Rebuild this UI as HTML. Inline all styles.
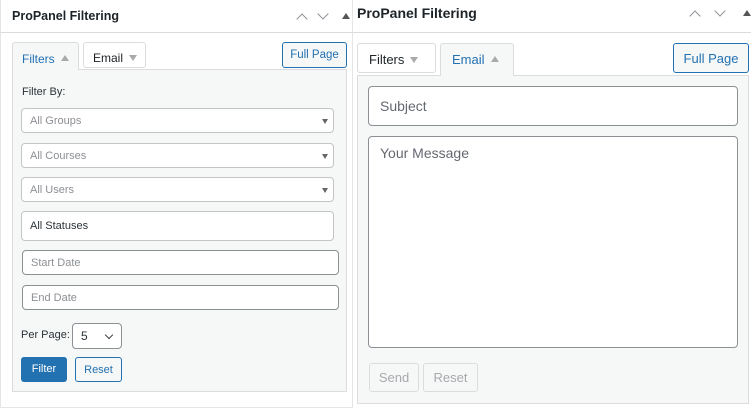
<!DOCTYPE html>
<html><head><style>
*{box-sizing:border-box;margin:0;padding:0}
body{width:751px;height:408px;background:#fff;font-family:"Liberation Sans",sans-serif;position:relative;overflow:hidden}
.a{position:absolute}
.box{position:absolute;background:#fff;border:1px solid #c3c4c7;border-radius:4px;color:#8c8f94;font-size:11px;padding-left:8px;display:flex;align-items:center}
.arr{position:absolute;right:5px;top:50%;margin-top:-2px;width:0;height:0;border-left:3.5px solid transparent;border-right:3.5px solid transparent;border-top:5px solid #666}
.chev{position:absolute;width:8px;height:8px;border-left:1.6px solid #8c8f94;border-top:1.6px solid #8c8f94}
.tri-up{display:inline-block;width:0;height:0;border-left:4px solid transparent;border-right:4px solid transparent;border-bottom:6px solid #aaa;margin-left:6px;vertical-align:2px}
.tri-dn{display:inline-block;width:0;height:0;border-left:4px solid transparent;border-right:4px solid transparent;border-top:6px solid #aaa;margin-left:6px;vertical-align:1px}
</style></head><body>
<div class="a" style="left:0;top:0;width:353px;height:408px;border:1px solid #e5e5e5;border-top:none;background:#fff"></div>
<div class="a" style="left:0;top:32px;width:353px;height:1px;background:#dcdcde"></div>
<div class="a" style="left:12px;top:9px;font-size:12.5px;font-weight:bold;color:#1d2327">ProPanel Filtering</div>
<div class="chev" style="left:298px;top:15px;transform:rotate(45deg)"></div>
<div class="chev" style="left:319px;top:10px;transform:rotate(225deg)"></div>
<div class="a" style="left:342px;top:13px;border-left:4px solid transparent;border-right:4px solid transparent;border-bottom:6px solid #555"></div>
<div class="a" style="left:12px;top:69px;width:335px;height:323px;background:#f6f7f7;border:1px solid #dcdcde"></div>
<div class="a" style="left:12px;top:42px;width:67px;height:28px;background:#f6f7f7;border:1px solid #dcdcde;border-bottom:none;border-radius:3px 3px 0 0;color:#2271b1;font-size:12px;padding:10px 0 0 9px;line-height:1">Filters<span class="tri-up"></span></div>
<div class="a" style="left:83px;top:42px;width:63px;height:26px;background:#fff;border:1px solid #dcdcde;border-radius:3px;color:#1d2327;font-size:12px;padding:9px 0 0 9px;line-height:1">Email<span class="tri-dn"></span></div>
<div class="a" style="left:282px;top:42px;width:65px;height:26px;background:#f6f7f7;border:1px solid #2271b1;border-radius:3px;color:#2271b1;font-size:11.5px;text-align:center;line-height:25px">Full Page</div>
<div class="a" style="left:22px;top:86px;font-size:11px;color:#2c3338">Filter By:</div>
<div class="box" style="left:21px;top:108px;width:313px;height:25px">All Groups<div class="arr"></div></div>
<div class="box" style="left:21px;top:143px;width:313px;height:25px">All Courses<div class="arr"></div></div>
<div class="box" style="left:21px;top:177px;width:313px;height:25px">All Users<div class="arr"></div></div>
<div class="box" style="left:21px;top:211px;width:313px;height:30px;color:#2c3338">All Statuses</div>
<div class="box" style="left:22px;top:250px;width:317px;height:25px;border-color:#8c8f94">Start Date</div>
<div class="box" style="left:22px;top:285px;width:317px;height:25px;border-color:#8c8f94">End Date</div>
<div class="a" style="left:21px;top:329px;font-size:11px;color:#2c3338">Per Page:</div>
<div class="box" style="left:72px;top:323px;width:50px;height:26px;border-color:#8c8f94;color:#2c3338;font-size:12px">5<div class="a" style="right:9px;top:8px;width:6px;height:6px;border-right:1.3px solid #444;border-bottom:1.3px solid #444;transform:rotate(45deg)"></div></div>
<div class="a" style="left:21px;top:357px;width:46px;height:25px;background:#2271b1;border-radius:3px;color:#fff;font-size:11px;text-align:center;line-height:25px">Filter</div>
<div class="a" style="left:75px;top:357px;width:47px;height:25px;background:#f6f7f7;border:1px solid #2271b1;border-radius:3px;color:#2271b1;font-size:11px;text-align:center;line-height:24px">Reset</div>
<div class="a" style="left:352px;top:32px;width:399px;height:1px;background:#dcdcde"></div>
<div class="a" style="left:357px;top:5px;font-size:14px;font-weight:bold;color:#1d2327">ProPanel Filtering</div>
<div class="chev" style="left:691px;top:12px;transform:rotate(45deg)"></div>
<div class="chev" style="left:716px;top:7px;transform:rotate(225deg)"></div>
<div class="a" style="left:743px;top:10px;border-left:4px solid transparent;border-right:4px solid transparent;border-bottom:6px solid #555"></div>
<div class="a" style="left:357px;top:75px;width:392px;height:329px;background:#f6f7f7;border:1px solid #dcdcde"></div>
<div class="a" style="left:357px;top:43px;width:79px;height:30px;background:#fff;border:1px solid #dcdcde;border-radius:3px;color:#1d2327;font-size:13px;padding:9px 0 0 11px;line-height:1">Filters<span class="tri-dn"></span></div>
<div class="a" style="left:440px;top:43px;width:74px;height:33px;background:#f6f7f7;border:1px solid #dcdcde;border-bottom:none;border-radius:3px 3px 0 0;color:#2271b1;font-size:13px;padding:9px 0 0 11px;line-height:1">Email<span class="tri-up"></span></div>
<div class="a" style="left:673px;top:43px;width:76px;height:30px;background:#f6f7f7;border:1px solid #2271b1;border-radius:3px;color:#2271b1;font-size:13px;text-align:center;line-height:29px">Full Page</div>
<div class="box" style="left:368px;top:86px;width:370px;height:40px;border-color:#8c8f94;font-size:14px;color:#646970;padding-left:11px">Subject</div>
<div class="box" style="left:368px;top:136px;width:370px;height:212px;border-color:#8c8f94;font-size:14px;color:#646970;padding:8px 0 0 11px;align-items:flex-start">Your Message</div>
<div class="a" style="left:369px;top:363px;width:50px;height:29px;border:1px solid #dcdcde;border-radius:3px;color:#a7aaad;font-size:13px;text-align:center;line-height:27px">Send</div>
<div class="a" style="left:423px;top:363px;width:55px;height:29px;border:1px solid #dcdcde;border-radius:3px;color:#a7aaad;font-size:13px;text-align:center;line-height:27px">Reset</div>
</body></html>
